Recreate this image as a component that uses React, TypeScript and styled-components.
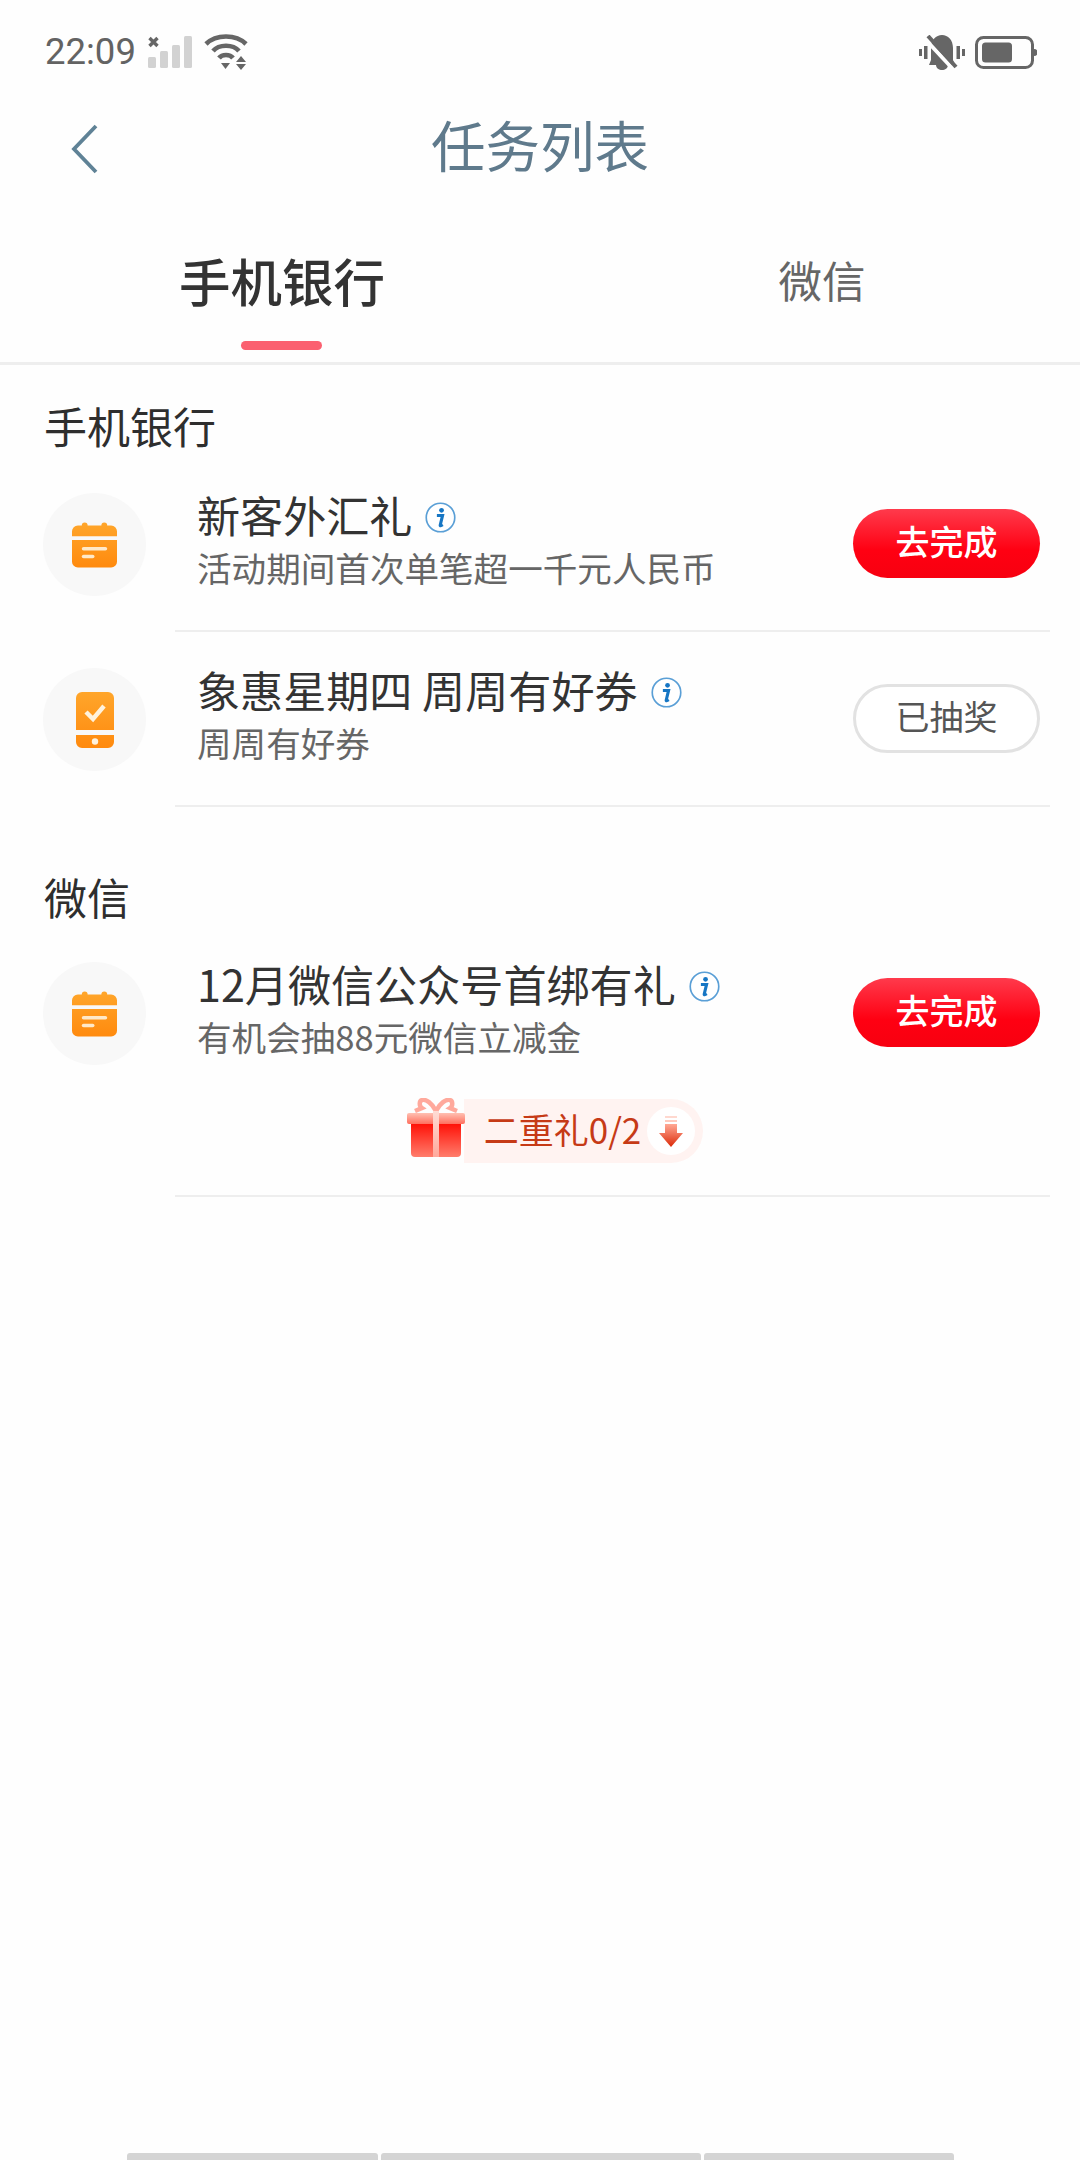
import React from "react";
import styled, { createGlobalStyle } from "styled-components";

const Global = createGlobalStyle`
  html, body { margin: 0; padding: 0; background: #fefefe; }
  * { box-sizing: border-box; }
  body { font-family: "Noto Sans CJK SC", "Noto Sans", sans-serif; }
`;

const Page = styled.div`
  width: 1080px;
  height: 2160px;
  display: flex;
  flex-direction: column;
  overflow: hidden;
  background: #fefefe;
`;

const StatusBar = styled.div`
  height: 104px;
  padding: 0 43px 0 45px;
  display: flex;
  align-items: center;
  justify-content: space-between;
  color: #666;
`;
const StatusGroup = styled.div<{ $gap: number }>`
  display: flex;
  align-items: center;
  gap: ${(p) => p.$gap}px;
`;
const Clock = styled.span`
  font-family: "Roboto", sans-serif;
  font-size: 36.5px;
  line-height: 44px;
  color: #636363;
`;

const NavBar = styled.div`
  height: 84px;
  padding-bottom: 5px;
  display: flex;
  align-items: center;
  justify-content: center;
  position: relative;
`;
const BackButton = styled.div`
  position: absolute;
  left: 67px;
  top: 20px;
  width: 32px;
  height: 50px;
  display: flex;
`;
const NavTitle = styled.h1`
  margin: 0;
  font-size: 54.5px;
  line-height: 79px;
  font-weight: 400;
  color: #5f7a8c;
`;

const Tabs = styled.div`
  height: 177px;
  display: grid;
  grid-template-columns: 564px 1fr;
  border-bottom: 3px solid #eeeeee;
`;
const Tab = styled.div`
  display: flex;
  flex-direction: column;
  align-items: center;
  padding-top: 59px;
`;
const TabLabel = styled.span<{ $active?: boolean }>`
  font-size: ${(p) => (p.$active ? 51.5 : 43.5)}px;
  line-height: 66px;
  font-weight: ${(p) => (p.$active ? 500 : 400)};
  color: ${(p) => (p.$active ? "#333" : "#666")};
`;
const TabMark = styled.i`
  display: block;
  width: 81px;
  height: 9px;
  margin-top: 28px;
  margin-left: -1px;
  border-radius: 5px;
  background: #fb6070;
`;

const SectionHead = styled.h2<{ $first?: boolean }>`
  margin: ${(p) => (p.$first ? 0 : 29)}px 0 0;
  padding: 35px 0 ${(p) => (p.$first ? 7 : 5)}px 44px;
  font-size: 43px;
  line-height: 50px;
  font-weight: 400;
  color: #2e2e2e;
`;

const Row = styled.div`
  display: flex;
  padding: 0 30px 0 43px;
`;
const IconCircle = styled.div`
  flex: none;
  width: 103px;
  height: 103px;
  margin: 36px 29px 0 0;
  border-radius: 50%;
  background: #f8f8f8;
  display: flex;
  align-items: center;
  justify-content: center;
`;
const RowBody = styled.div`
  flex: 1;
  padding: 0 10px 0 22px;
  border-bottom: 2px solid #eeeeee;
`;
const RowMain = styled.div`
  height: 173px;
  display: flex;
  align-items: center;
  justify-content: space-between;
`;
const RowText = styled.div`
  display: flex;
  flex-direction: column;
  padding-bottom: 10px;
`;
const TitleLine = styled.div`
  display: flex;
  align-items: center;
  gap: 13px;
  height: 56px;
`;
const TaskTitle = styled.span`
  font-size: 43.1px;
  line-height: 56px;
  color: #333;
`;
const InfoMark = styled.span`
  display: flex;
  margin-top: 8px;
`;
const TaskSub = styled.span`
  font-size: 34.6px;
  line-height: 50px;
  color: #666;
`;
const ActionButton = styled.div<{ $done?: boolean }>`
  width: 187px;
  height: 69px;
  padding-bottom: 6px;
  border-radius: 35px;
  display: flex;
  align-items: center;
  justify-content: center;
  font-size: 34px;
  font-weight: ${(p) => (p.$done ? 400 : 500)};
  color: ${(p) => (p.$done ? "#555" : "#fff")};
  background: ${(p) =>
    p.$done ? "#fff" : "linear-gradient(180deg, #ff3a4c 0%, #ff0012 60%, #f70010 100%)"};
  border: ${(p) => (p.$done ? "3px solid #e2e2e2" : "none")};
`;

const RewardRow = styled.div`
  display: flex;
  justify-content: center;
  align-items: center;
  padding: 0 128px 32px 0;
`;
const GiftWrap = styled.div`
  flex: none;
  width: 60px;
  height: 60px;
  margin: -6px -2px 0 0;
  position: relative;
  z-index: 1;
`;
const RewardPill = styled.div`
  display: flex;
  align-items: center;
  height: 64px;
  padding: 0 8px 0 20px;
  border-radius: 0 32px 32px 0;
  background: #fff3f1;
`;
const RewardText = styled.span`
  font-size: 35px;
  line-height: 58px;
  padding-bottom: 4px;
  color: #c63a16;
`;
const ArrowDot = styled.div`
  width: 48px;
  height: 48px;
  margin-left: 6px;
  border-radius: 50%;
  background: #fff;
  display: flex;
  align-items: center;
  justify-content: center;
`;

const HomeBar = styled.div`
  margin-top: auto;
  height: 7px;
  padding-left: 127px;
  display: flex;
  gap: 3px;
`;
const HomeSegment = styled.i<{ $w: number }>`
  display: block;
  width: ${(p) => p.$w}px;
  height: 7px;
  background: #d4d4d4;
  border-radius: 3px 3px 0 0;
`;

const SignalIcon = () => (
  <svg width="44" height="32" viewBox="0 0 44 32">
    <path d="M1.500 2l8 8M9.500 2l-8 8" stroke="#666" strokeWidth="3.400" fill="none" />
    <rect x="0" y="21" width="8" height="11" rx="1.500" fill="#d2d2d2" />
    <rect x="12" y="15" width="8" height="17" rx="1.500" fill="#d2d2d2" />
    <rect x="24" y="9" width="8" height="23" rx="1.500" fill="#d2d2d2" />
    <rect x="36" y="0" width="8" height="32" rx="1.500" fill="#d2d2d2" />
  </svg>
);

const WifiIcon = () => (
  <svg width="44" height="36" viewBox="0 0 44 36">
    <path d="M2 10C12 0 32 0 42 10" stroke="#666" strokeWidth="4.600" fill="none" />
    <path d="M9 17C15 10 29 10 35 17" stroke="#666" strokeWidth="4.600" fill="none" />
    <path d="M15 24C18 20 26 20 29 24" stroke="#666" strokeWidth="4.600" fill="none" />
    <path d="M17 29h9l-4.500 6z" fill="#666" />
    <path d="M37 22l5 6H32zM32 30h10l-5 6z" fill="#666" />
  </svg>
);

const MuteIcon = () => (
  <svg width="46" height="35" viewBox="0 0 46 35">
    <rect x="0" y="14" width="3" height="7" fill="#666" />
    <rect x="5" y="11" width="3.500" height="13" fill="#666" />
    <rect x="37.500" y="11" width="3.500" height="13" fill="#666" />
    <rect x="43" y="14" width="3" height="7" fill="#666" />
    <path d="M10 30l2-5V13C12 5 17 0 23 0s11 5 11 13v12l2 5z" fill="#666" />
    <path d="M17 30h12c0 3-3 5-6 5s-6-2-6-5z" fill="#666" />
    <path d="M6 4l29 31" stroke="#fefefe" strokeWidth="4" />
    <path d="M9 1l28 31" stroke="#666" strokeWidth="4" />
  </svg>
);

const BatteryIcon = () => (
  <svg width="62" height="33" viewBox="0 0 62 33">
    <rect x="1.500" y="1.500" width="56" height="30" rx="7" fill="none" stroke="#666" strokeWidth="3" />
    <rect x="7" y="6.500" width="30" height="20" rx="3.500" fill="#666" />
    <path d="M59 13a3.500 3.500 0 0 1 0 7z" fill="#666" />
  </svg>
);

const BackIcon = () => (
  <svg width="32" height="50" viewBox="0 0 32 50">
    <path d="M29 2L7 25l22 23" fill="none" stroke="#5f8296" strokeWidth="3.800" />
  </svg>
);

const InfoIcon = () => (
  <svg width="31" height="31" viewBox="0 0 30 30">
    <circle cx="15" cy="15" r="13.800" fill="#fff" stroke="#5a9fd6" strokeWidth="1.600" />
    <circle cx="16" cy="8" r="2.300" fill="#1676c4" />
    <path d="M11.500 13h5.500l-2.300 9.500c-.1.600.5.700 2.500-.5" fill="none" stroke="#1676c4" strokeWidth="3" />
  </svg>
);

const orange = (id: string) => (
  <linearGradient id={id} x1="0" y1="0" x2="0" y2="1">
    <stop offset="0" stopColor="#ffa62b" />
    <stop offset="1" stopColor="#ff8a0e" />
  </linearGradient>
);

const CalendarIcon = ({ id }: { id: string }) => (
  <svg width="45" height="46" viewBox="0 0 46 46">
    <defs>{orange(id)}</defs>
    <path
      d="M0 18h46v22a6 6 0 0 1-6 6H6a6 6 0 0 1-6-6zM0 14V9a6 6 0 0 1 6-6h4a3 3 0 0 1 6 0h14a3 3 0 0 1 6 0h4a6 6 0 0 1 6 6v5z"
      fill={`url(#${id})`}
    />
    <rect x="10" y="25" width="26" height="3.600" rx="1.800" fill="#ffe9c9" />
    <rect x="10" y="33" width="13" height="3.600" rx="1.800" fill="#ffe9c9" />
  </svg>
);

const PhoneIcon = () => (
  <svg width="38" height="56" viewBox="0 0 38 56">
    <defs>{orange("phoneGrad")}</defs>
    <path
      d="M0 6a6 6 0 0 1 6-6h26a6 6 0 0 1 6 6v32H0zM0 43h38v7a6 6 0 0 1-6 6H6a6 6 0 0 1-6-6z"
      fill="url(#phoneGrad)"
    />
    <path d="M10 20l7 7 11-13" fill="none" stroke="#fff2dc" strokeWidth="4.500" />
    <circle cx="19" cy="49.500" r="3.200" fill="#fff2dc" />
  </svg>
);

const GiftIcon = () => (
  <svg width="60" height="60" viewBox="0 0 60 60">
    <defs>
      <linearGradient id="giftBody" x1="0" y1="0" x2="0" y2="1">
        <stop offset="0" stopColor="#ff1208" />
        <stop offset="1" stopColor="#ff7d6c" />
      </linearGradient>
      <linearGradient id="giftLid" x1="0" y1="0" x2="0" y2="1">
        <stop offset="0" stopColor="#ffc0b2" />
        <stop offset="1" stopColor="#ff6f5e" />
      </linearGradient>
      <linearGradient id="giftRibbon" x1="0" y1="0" x2="0" y2="1">
        <stop offset="0" stopColor="#ffdcd5" />
        <stop offset="1" stopColor="#ffa99c" />
      </linearGradient>
    </defs>
    <path
      d="M30 13C26 5 20 1 16 2c-3 1-3 6 0 8l-7 3M30 13C34 5 40 1 44 2c3 1 3 6 0 8l7 3"
      fill="none"
      stroke="#ffa99c"
      strokeWidth="4.500"
    />
    <rect x="1" y="15" width="58" height="11" rx="2" fill="url(#giftLid)" />
    <path d="M5 26h50v29a4 4 0 0 1-4 4H9a4 4 0 0 1-4-4z" fill="url(#giftBody)" />
    <rect x="27" y="13" width="6" height="46" fill="url(#giftRibbon)" />
  </svg>
);

const ArrowIcon = () => (
  <svg width="24" height="31" viewBox="0 0 24 31">
    <defs>
      <linearGradient id="arrowGrad" x1="0" y1="0" x2="0" y2="1">
        <stop offset="0" stopColor="#ffa894" />
        <stop offset="1" stopColor="#dc2a08" />
      </linearGradient>
    </defs>
    <rect x="6" y="0" width="12" height="2" fill="#ffd8cf" />
    <rect x="6" y="4" width="12" height="2" fill="#ffcabd" />
    <path d="M6 8h12v9h6L12 31 0 17h6z" fill="url(#arrowGrad)" />
  </svg>
);

type Task = {
  id: string;
  title: string;
  sub: string;
  icon: "calendar" | "phone";
  action: string;
  done?: boolean;
};

const TaskRow = ({ task, children }: { task: Task; children?: React.ReactNode }) => (
  <Row>
    <IconCircle>
      {task.icon === "calendar" ? <CalendarIcon id={`cal-${task.id}`} /> : <PhoneIcon />}
    </IconCircle>
    <RowBody>
      <RowMain>
        <RowText>
          <TitleLine>
            <TaskTitle>{task.title}</TaskTitle>
            <InfoMark>
              <InfoIcon />
            </InfoMark>
          </TitleLine>
          <TaskSub>{task.sub}</TaskSub>
        </RowText>
        <ActionButton $done={task.done}>{task.action}</ActionButton>
      </RowMain>
      {children}
    </RowBody>
  </Row>
);

export default function App() {
  return (
    <Page>
      <Global />
      <StatusBar>
        <StatusGroup $gap={12}>
          <Clock>22:09</Clock>
          <SignalIcon />
          <WifiIcon />
        </StatusGroup>
        <StatusGroup $gap={10}>
          <MuteIcon />
          <BatteryIcon />
        </StatusGroup>
      </StatusBar>
      <NavBar>
        <BackButton>
          <BackIcon />
        </BackButton>
        <NavTitle>任务列表</NavTitle>
      </NavBar>
      <Tabs>
        <Tab>
          <TabLabel $active>手机银行</TabLabel>
          <TabMark />
        </Tab>
        <Tab>
          <TabLabel>微信</TabLabel>
        </Tab>
      </Tabs>
      <SectionHead $first>手机银行</SectionHead>
      <TaskRow
        task={{ id: "a", title: "新客外汇礼", sub: "活动期间首次单笔超一千元人民币", icon: "calendar", action: "去完成" }}
      />
      <TaskRow
        task={{ id: "b", title: "象惠星期四 周周有好券", sub: "周周有好券", icon: "phone", action: "已抽奖", done: true }}
      />
      <SectionHead>微信</SectionHead>
      <TaskRow
        task={{ id: "c", title: "12月微信公众号首绑有礼", sub: "有机会抽88元微信立减金", icon: "calendar", action: "去完成" }}
      >
        <RewardRow>
          <GiftWrap>
            <GiftIcon />
          </GiftWrap>
          <RewardPill>
            <RewardText>二重礼0/2</RewardText>
            <ArrowDot>
              <ArrowIcon />
            </ArrowDot>
          </RewardPill>
        </RewardRow>
      </TaskRow>
      <HomeBar>
        <HomeSegment $w={251} />
        <HomeSegment $w={320} />
        <HomeSegment $w={250} />
      </HomeBar>
    </Page>
  );
}
